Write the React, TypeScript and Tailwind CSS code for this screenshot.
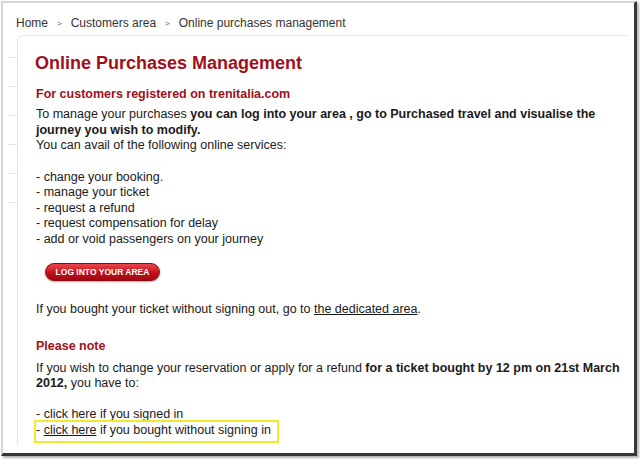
import React from 'react';

const font = { fontFamily: '"Liberation Sans", Arial, sans-serif' };

function Breadcrumb() {
  const items = ['Home', 'Customers area', 'Online purchases management'];
  return (
    <div className="h-[32px] pt-[12px] pl-[13px] flex items-start text-[12px] leading-[16px] text-[#333]">
      {items.map((item, i) => (
        <React.Fragment key={item}>
          {i > 0 && <span className="mx-[9px] text-[8px] leading-[18px] text-[#555]">&gt;</span>}
          <span>{item}</span>
        </React.Fragment>
      ))}
    </div>
  );
}

function SideStubs() {
  return (
    <div className="ml-[5px] w-[9px] flex flex-col">
      <div className="h-[23px] border-b border-[#e6e6e6]" />
      {[0, 1, 2, 3, 4].map((i) => (
        <div key={i} className="h-[29px] border-b border-[#e6e6e6]" />
      ))}
    </div>
  );
}

export default function App() {
  const services = [
    'change your booking.',
    'manage your ticket',
    'request a refund',
    'request compensation for delay',
    'add or void passengers on your journey',
  ];

  return (
    <div className="w-[640px] h-[459px] bg-white overflow-hidden" style={font}>
      <div className="ml-[1px] mt-[1px] w-[636px] h-[455px] flex flex-col bg-white border-t-2 border-l-2 border-r-[3px] border-b-[3px] border-t-[#d6d6d6] border-l-[#d6d6d6] border-r-[#383838] border-b-[#383838] shadow-[2px_2px_2px_rgba(0,0,0,0.3)]">
        <Breadcrumb />
        <div className="flex flex-1 pb-[8px]">
          <SideStubs />
          <div className="flex-1 mr-[6px] border-t border-l border-[#e6e6e6] rounded-tl-[6px] pt-[16px] pl-[18px] text-[#1a1a1a]">
            <h1 className="text-[18px] leading-[22px] font-bold text-[#a0101a] -ml-[1px]">
              Online Purchases Management
            </h1>
            <h2 className="mt-[12px] text-[12.5px] leading-[16px] font-bold text-[#a0101a]">
              For customers registered on trenitalia.com
            </h2>
            <div className="mt-[5px] text-[12.5px] leading-[15.5px] whitespace-nowrap">
              <div>
                To manage your purchases <b>you can log into your area , go to Purchased travel and visualise the</b>
              </div>
              <div>
                <b>journey you wish to modify.</b>
              </div>
              <div>You can avail of the following online services:</div>
              <div className="h-[16px]" />
              {services.map((s) => (
                <div key={s}>- {s}</div>
              ))}
            </div>
            <div className="mt-[11px] ml-[9px]">
              <button className="w-[115px] h-[18px] rounded-full border border-[#8c0a12] bg-gradient-to-b from-[#e8444c] via-[#c8101c] to-[#a00812] text-white text-[8.5px] font-bold leading-[16px] shadow-[0_1px_2px_rgba(0,0,0,0.35)]">
                LOG INTO YOUR AREA
              </button>
            </div>
            <div className="mt-[20px] text-[12.5px] leading-[15.5px]">
              If you bought your ticket without signing out, go to <span className="underline">the dedicated area</span>.
            </div>
            <h2 className="mt-[20px] text-[12.5px] leading-[16px] font-bold text-[#a0101a]">Please note</h2>
            <div className="mt-[7px] text-[12.5px] leading-[15.5px] whitespace-nowrap">
              <div>
                If you wish to change your reservation or apply for a refund <b>for a ticket bought by 12 pm on 21st March</b>
              </div>
              <div>
                <b>2012,</b> you have to:
              </div>
              <div className="h-[15.5px]" />
              <div>- click here if you signed in</div>
              <div className="relative">
                - <span className="underline">click here</span> if you bought without signing in
                <span className="absolute -left-[2px] -top-[3px] w-[245px] h-[23px] border-2 border-[#eeeb2c]" />
              </div>
            </div>
          </div>
        </div>
      </div>
    </div>
  );
}
